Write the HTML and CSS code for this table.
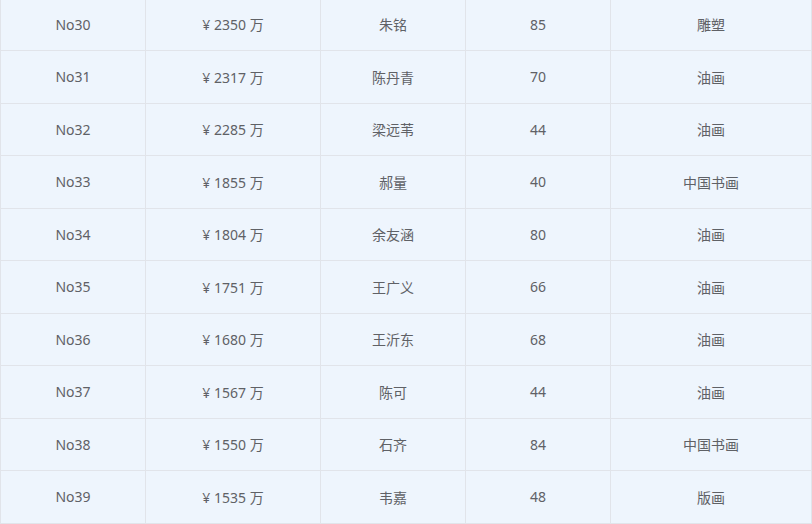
FILE: index.html
```html
<!DOCTYPE html>
<html lang="zh">
<head>
<meta charset="utf-8">
<title>排行</title>
<link rel="stylesheet" href="styles.css">
</head>
<body>
<div class="viewport">
<table class="rank">
<colgroup>
<col class="c1"><col class="c2"><col class="c3"><col class="c4"><col class="c5">
</colgroup>
<tbody>
<tr><td>No30</td><td>¥ 2350 万</td><td>朱铭</td><td>85</td><td>雕塑</td></tr>
<tr><td>No31</td><td>¥ 2317 万</td><td>陈丹青</td><td>70</td><td>油画</td></tr>
<tr><td>No32</td><td>¥ 2285 万</td><td>梁远苇</td><td>44</td><td>油画</td></tr>
<tr><td>No33</td><td>¥ 1855 万</td><td>郝量</td><td>40</td><td>中国书画</td></tr>
<tr><td>No34</td><td>¥ 1804 万</td><td>余友涵</td><td>80</td><td>油画</td></tr>
<tr><td>No35</td><td>¥ 1751 万</td><td>王广义</td><td>66</td><td>油画</td></tr>
<tr><td>No36</td><td>¥ 1680 万</td><td>王沂东</td><td>68</td><td>油画</td></tr>
<tr><td>No37</td><td>¥ 1567 万</td><td>陈可</td><td>44</td><td>油画</td></tr>
<tr><td>No38</td><td>¥ 1550 万</td><td>石齐</td><td>84</td><td>中国书画</td></tr>
<tr><td>No39</td><td>¥ 1535 万</td><td>韦嘉</td><td>48</td><td>版画</td></tr>
</tbody>
</table>
</div>
</body>
</html>
```
FILE: styles.css
```css
html, body {
  margin: 0;
  padding: 0;
  background: #ffffff;
}
.viewport {
  width: 812px;
  height: 524px;
  overflow: hidden;
}
.rank {
  width: 812px;
  margin-top: -2.5px;
  border-collapse: separate;
  border-spacing: 0;
  table-layout: fixed;
  background: #eef5fd;
  font-family: "Noto Sans", "Noto Sans CJK SC", sans-serif;
  font-size: 14px;
  color: #5f6166;
  border-top: 1px solid #e1e4ea;
}
.c1 { width: 146px; }
.c2 { width: 175px; }
.c3 { width: 145px; }
.c4 { width: 145px; }
.c5 { width: 201px; }
.rank td {
  height: 52.5px;
  padding: 0;
  text-align: center;
  vertical-align: middle;
  border-right: 1px solid #e1e4ea;
  border-bottom: 1px solid #e1e4ea;
  box-sizing: border-box;
}
.rank td:first-child {
  border-left: 1px solid #e1e4ea;
}
```
